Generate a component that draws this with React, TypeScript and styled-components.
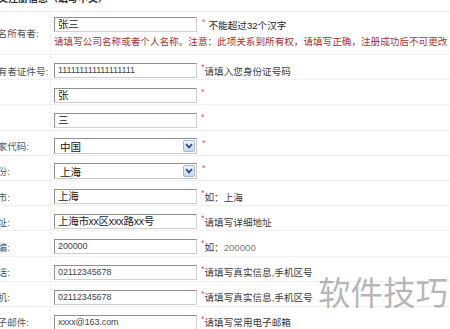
import styled, { createGlobalStyle } from 'styled-components';

type FieldRow = {
  label: string;
  kind: 'input' | 'select';
  value: string;
  numeric?: boolean;
  hint?: string;
  example?: string;
};

const rows: FieldRow[] = [
  { label: '所有者证件号:', kind: 'input', value: '111111111111111111', numeric: true, hint: '请填入您身份证号码' },
  { label: '姓:', kind: 'input', value: '张' },
  { label: '名:', kind: 'input', value: '三' },
  { label: '国家代码:', kind: 'select', value: '中国' },
  { label: '省份:', kind: 'select', value: '上海' },
  { label: '城市:', kind: 'input', value: '上海', hint: '如：', example: '上海' },
  { label: '地址:', kind: 'input', value: '上海市xx区xxx路xx号', hint: '请填写详细地址' },
  { label: '邮编:', kind: 'input', value: '200000', numeric: true, hint: '如：', example: '200000' },
  { label: '电话:', kind: 'input', value: '02112345678', numeric: true, hint: '请填写真实信息,手机区号' },
  { label: '手机:', kind: 'input', value: '02112345678', numeric: true, hint: '请填写真实信息,手机区号' },
  { label: '电子邮件:', kind: 'input', value: 'xxxx@163.com', numeric: true, hint: '请填写常用电子邮箱' },
];

const App = () => {
  return (
    <Root>
      <GlobalStyle />
      <Page>
        <Title>中文注册信息（填写中文）</Title>
        <Row $tall>
          <Label $tall>域名所有者:</Label>
          <Field $tall>
            <Line>
              <TextBox>张三</TextBox>
              <Star $gap>*</Star>
              <Hint $dark>不能超过32个汉字</Hint>
            </Line>
            <Note>
              请填写公司名称或者个人名称。注意：此项关系到所有权，请填写正确，注册成功后不可更改
            </Note>
          </Field>
        </Row>
        {rows.map((row) => (
          <Row key={row.label}>
            <Label>{row.label}</Label>
            <Field>
              {row.kind === 'select' ? (
                <SelectBox>
                  <SelectText>{row.value}</SelectText>
                  <DropButton>
                    <svg width="8" height="6" viewBox="0 0 8 6">
                      <path d="M1 1.2 L4 4.4 L7 1.2" fill="none" stroke="#2b4c86" strokeWidth="1.8" />
                    </svg>
                  </DropButton>
                </SelectBox>
              ) : (
                <TextBox $numeric={row.numeric}>{row.value}</TextBox>
              )}
              <Star $gap={row.kind === 'select'}>*</Star>
              {row.hint && (
                <Hint>
                  {row.hint}
                  {row.example && <Example $muted={row.numeric}>{row.example}</Example>}
                </Hint>
              )}
            </Field>
          </Row>
        ))}
      </Page>
      <Watermark>软件技巧</Watermark>
    </Root>
  );
};
export default App;

const GlobalStyle = createGlobalStyle`
  html, body {
    margin: 0;
    padding: 0;
    background: #fff;
    overflow: hidden;
  }
  body {
    font-family: "Liberation Sans", "Noto Sans CJK SC", sans-serif;
  }
`;

const Root = styled.div`
  position: relative;
  width: 450px;
  height: 329px;
  overflow: hidden;
`;

// the screenshot is a crop: the page runs on past the top and left edges
const Page = styled.div`
  margin: -7px 0 0 -12px;
  width: 480px;
`;

const Title = styled.div`
  height: 18px;
  border-bottom: 1px solid #ececec;
  font-size: 10px;
  line-height: 12px;
  font-weight: bold;
  color: #333;
  white-space: nowrap;
`;

const Row = styled.div<{ $tall?: boolean }>`
  box-sizing: border-box;
  display: grid;
  grid-template-columns: 63px 1fr;
  height: ${(p) => (p.$tall ? '43px' : '25.2px')};
  border-bottom: 1px solid #efefef;
`;

const Label = styled.div<{ $tall?: boolean }>`
  display: flex;
  align-items: center;
  padding-top: ${(p) => (p.$tall ? '0' : '7px')};
  border-right: 1px solid #f2f2f2;
  font-size: 9.6px;
  color: #555;
  white-space: nowrap;
  overflow: hidden;
`;

const Field = styled.div<{ $tall?: boolean }>`
  display: flex;
  flex-direction: ${(p) => (p.$tall ? 'column' : 'row')};
  align-items: ${(p) => (p.$tall ? 'flex-start' : 'center')};
  padding: ${(p) => (p.$tall ? '5px 0 0 3px' : '7px 0 0 3px')};
  white-space: nowrap;
`;

const Line = styled.div`
  display: flex;
  align-items: center;
`;

const TextBox = styled.div<{ $numeric?: boolean }>`
  box-sizing: border-box;
  width: 143px;
  height: 15px;
  padding-left: 3px;
  border: 1px solid;
  border-color: #8f8f8f #cfcfcf #cfcfcf #8f8f8f;
  background: #fff;
  font-size: ${(p) => (p.$numeric ? '9px' : '10.5px')};
  letter-spacing: ${(p) => (p.$numeric ? '-0.1px' : '-0.3px')};
  line-height: 13px;
  color: ${(p) => (p.$numeric ? '#444' : '#222')};
`;

const SelectBox = styled.div`
  box-sizing: border-box;
  display: flex;
  align-items: center;
  width: 143px;
  height: 16px;
  border: 1px solid;
  border-color: #8f8f8f #c8c8c8 #c8c8c8 #8f8f8f;
  background: #fff;
`;

const SelectText = styled.span`
  flex: 1;
  padding-left: 5px;
  font-size: 10.5px;
  color: #111;
`;

const DropButton = styled.span`
  box-sizing: border-box;
  display: flex;
  align-items: center;
  justify-content: center;
  width: 12px;
  height: 12px;
  margin-right: 1px;
  border: 1px solid #a3b9d8;
  border-radius: 2px;
  background: linear-gradient(#eef3fb, #c9d8ee);
`;

const Star = styled.span<{ $gap?: boolean }>`
  align-self: flex-start;
  margin: ${(p) => (p.$gap ? '0 3px 0 5px' : '0 0 0 4px')};
  font-size: 9px;
  line-height: 10px;
  color: #e0505a;
`;

const Hint = styled.span<{ $dark?: boolean }>`
  font-size: 9.6px;
  color: ${(p) => (p.$dark ? '#1a1a1a' : '#3a3a3a')};
`;

const Example = styled.span<{ $muted?: boolean }>`
  color: ${(p) => (p.$muted ? '#7a7a7a' : '#3a3a3a')};
`;

const Note = styled.div`
  margin-top: 4px;
  font-size: 9.6px;
  line-height: 12px;
  color: #a8322e;
`;

const Watermark = styled.div`
  position: absolute;
  left: 318px;
  top: 271px;
  font-family: "Noto Sans CJK SC", sans-serif;
  font-size: 32.5px;
  line-height: 40px;
  color: rgba(110, 110, 110, 0.5);
  white-space: nowrap;
`;
